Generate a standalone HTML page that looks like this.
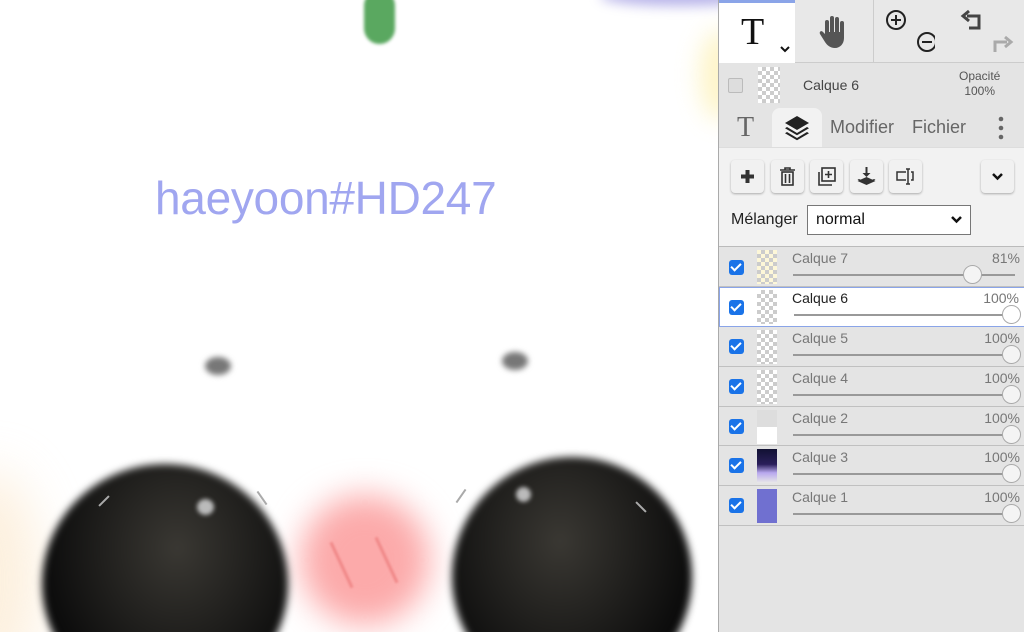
<!DOCTYPE html>
<html><head><meta charset="utf-8"><style>
*{margin:0;padding:0;box-sizing:border-box}
html,body{width:1024px;height:632px;overflow:hidden}
body{position:relative;background:#fff;font-family:"Liberation Sans",Arial,sans-serif}
.cv{position:absolute;left:0;top:0;width:718px;height:632px;background:#fff;overflow:hidden}
.b{position:absolute}
.panel{position:absolute;left:718px;top:0;width:306px;height:632px;background:#e4e4e4;border-left:1px solid #aaa;overflow:hidden}
.cb{position:absolute;left:10px;width:15px;height:15px;background:#1a73e8;border-radius:3px}
.cb:after{content:"";position:absolute;left:4px;top:1px;width:4px;height:8px;border:solid #fff;border-width:0 2.5px 2.5px 0;transform:rotate(45deg)}
.row{position:absolute;left:0;width:306px;border-bottom:1px solid #c0c0c0;background:#e4e4e4}
.row .n{position:absolute;left:73px;top:3px;font-size:14px;color:#777}
.row .p{position:absolute;right:5px;top:3px;font-size:14px;color:#777}
.row .tr{position:absolute;left:74px;right:10px;top:27px;height:2px;background:#999}
.row .k{position:absolute;top:18px;width:19px;height:19px;border-radius:50%;background:#f4f4f4;border:1px solid #aaa}
.th{position:absolute;left:38px;top:3px;width:20px;height:34px;background-color:#fff;background-image:linear-gradient(45deg,#ccc 25%,transparent 25%,transparent 75%,#ccc 75%),linear-gradient(45deg,#ccc 25%,transparent 25%,transparent 75%,#ccc 75%);background-size:8px 8px;background-position:0 0,4px 4px}
.btn{position:absolute;top:160px;width:33px;height:33px;background:#f1f1f1;border-radius:4px;box-shadow:0 1px 2px #aaa;text-align:center;color:#333}
.btn svg{position:absolute;left:6px;top:6px}
</style></head><body>
<div class="cv">
 <div class="b" style="left:-60px;top:470px;width:100px;height:220px;border-radius:50%;background:#fbe6c8;filter:blur(25px);opacity:.6"></div>
 <div class="b" style="left:700px;top:30px;width:40px;height:90px;border-radius:50%;background:#fdf0b0;filter:blur(12px);opacity:.7"></div>
 <div class="b" style="left:600px;top:-14px;width:160px;height:20px;border-radius:50%;background:#9a94e0;filter:blur(6px);opacity:.7"></div>
 <div class="b" style="left:364px;top:-10px;width:31px;height:54px;border-radius:16px;background:#5aa860;filter:blur(1.5px)"></div>
 <div class="b" style="left:155px;top:171px;font-size:46px;color:#a0a6f0;letter-spacing:-.3px">haeyoon#HD247</div>
 <div class="b" style="left:205px;top:357px;width:26px;height:18px;border-radius:50%;background:#777;filter:blur(3px)"></div>
 <div class="b" style="left:502px;top:352px;width:26px;height:18px;border-radius:50%;background:#777;filter:blur(3px)"></div>
 <div class="b" style="left:300px;top:495px;width:130px;height:130px;border-radius:50%;background:#fcaaaa;filter:blur(16px)"></div>
 <div class="b" style="left:340px;top:540px;width:3px;height:50px;background:#f08888;transform:rotate(-25deg);filter:blur(1px)"></div>
 <div class="b" style="left:385px;top:535px;width:3px;height:50px;background:#f08888;transform:rotate(-25deg);filter:blur(1px)"></div>
 <div class="b" style="left:42px;top:464px;width:246px;height:240px;border-radius:50%;background:radial-gradient(ellipse at 55% 35%,#3a3833,#0c0c0c 70%);filter:blur(4px)"></div>
 <div class="b" style="left:452px;top:457px;width:240px;height:240px;border-radius:50%;background:radial-gradient(ellipse at 45% 35%,#3a3833,#0c0c0c 70%);filter:blur(4px)"></div>
 <div class="b" style="left:197px;top:499px;width:17px;height:16px;border-radius:50%;background:#bbb;filter:blur(2px)"></div>
 <div class="b" style="left:516px;top:487px;width:15px;height:15px;border-radius:50%;background:#bbb;filter:blur(2px)"></div>
 <div class="b" style="left:103px;top:494px;width:2px;height:14px;background:#aaa;transform:rotate(45deg)"></div>
 <div class="b" style="left:261px;top:490px;width:2px;height:16px;background:#aaa;transform:rotate(-35deg)"></div>
 <div class="b" style="left:460px;top:488px;width:2px;height:16px;background:#aaa;transform:rotate(35deg)"></div>
 <div class="b" style="left:640px;top:500px;width:2px;height:14px;background:#aaa;transform:rotate(-45deg)"></div>
</div>
<div class="panel">
 <div class="b" style="left:0;top:0;width:306px;height:63px;background:#e8e8e8;border-bottom:1px solid #ccc"></div>
 <div class="b" style="left:0;top:0;width:76px;height:63px;background:#fff;border-top:3px solid #8aa4e8"></div>
 <div class="b" style="left:22px;top:10px;font-family:'Liberation Serif',serif;font-size:38px;color:#111">T</div>
 <svg class="b" style="left:61px;top:46px" width="10" height="7" viewBox="0 0 10 7"><path d="M1 1l4 4 4-4" stroke="#111" stroke-width="2" fill="none"/></svg>
 <svg class="b" style="left:99px;top:14px" width="32" height="36" viewBox="0 0 32 36" fill="#555"><rect x="7" y="6" width="4" height="16" rx="2"/><rect x="12" y="2" width="4" height="18" rx="2"/><rect x="17" y="3" width="4" height="18" rx="2"/><rect x="22" y="7" width="4" height="15" rx="2"/><path d="M7 18h19v6c0 6-4 10-9 10s-8-3-10-6l-5-8c-1-2 1-4 3-2l3 3z"/></svg>
 <div class="b" style="left:154px;top:0;width:1px;height:63px;background:#ccc"></div>
 <svg class="b" style="left:166px;top:8px" width="50" height="48" viewBox="0 0 50 48" fill="none" stroke="#222" stroke-width="2"><circle cx="11" cy="12" r="9"/><path d="M6 12h10M11 7v10"/><circle cx="42" cy="34" r="9"/><path d="M37 34h10"/></svg>
 <svg class="b" style="left:240px;top:8px" width="60" height="48" viewBox="0 0 60 48" fill="none" stroke-width="3"><path d="M8 8h12v12h-10" stroke="#444"/><path d="M10 3l-6 5 6 5" stroke="#444"/><path d="M36 44V34h12" stroke="#aaa"/><path d="M46 29l6 5-6 5" stroke="#aaa"/></svg>
 <div class="b" style="left:9px;top:78px;width:15px;height:15px;background:#ddd;border:1px solid #bbb;border-radius:2px"></div>
 <div class="th" style="left:39px;top:67px;height:36px;width:22px"></div>
 <div class="b" style="left:84px;top:77px;font-size:14px;color:#444">Calque 6</div>
 <div class="b" style="left:240px;top:69px;font-size:12px;color:#555;text-align:center;line-height:15px">Opacité<br>100%</div>
 <div class="b" style="left:53px;top:108px;width:50px;height:40px;background:#f2f2f2;border-radius:8px 8px 0 0"></div>
 <div class="b" style="left:0;top:147px;width:306px;height:100px;background:#f2f2f2;border-top:1px solid #ddd"></div>
 <div class="b" style="left:18px;top:112px;font-family:'Liberation Serif',serif;font-size:28px;color:#666">T</div>
 <svg class="b" style="left:64px;top:114px" width="28" height="28" viewBox="0 0 28 28" fill="#222"><path d="M14 2l12 7-12 7-12-7z"/><path d="M4 13l10 6 10-6 2 1.2-12 7-12-7z"/><path d="M4 18l10 6 10-6 2 1.2-12 7-12-7z"/></svg>
 <div class="b" style="left:111px;top:117px;font-size:18px;color:#666">Modifier</div>
 <div class="b" style="left:193px;top:117px;font-size:18px;color:#666">Fichier</div>
 <svg class="b" style="left:278px;top:115px" width="8" height="26"><circle cx="4" cy="4" r="2.3" fill="#666"/><circle cx="4" cy="13" r="2.3" fill="#666"/><circle cx="4" cy="22" r="2.3" fill="#666"/></svg>
 <div class="btn" style="left:12px"><svg width="21" height="21" viewBox="0 0 21 21"><path d="M10.5 4v13M4 10.5h13" stroke="#333" stroke-width="4"/></svg></div>
 <div class="btn" style="left:52px"><svg width="21" height="21" viewBox="0 0 21 21" fill="none" stroke="#333" stroke-width="1.6"><path d="M3 4h15M8 4V2h5v2"/><rect x="5" y="6" width="11" height="13"/><path d="M8.5 8v9M12.5 8v9"/></svg></div>
 <div class="btn" style="left:91px"><svg width="21" height="21" viewBox="0 0 21 21" fill="none" stroke="#333" stroke-width="1.6"><rect x="6" y="2" width="13" height="13"/><path d="M3 6v13h13M12.5 5v7M9 8.5h7"/></svg></div>
 <div class="btn" style="left:131px"><svg width="21" height="21" viewBox="0 0 21 21" fill="#333"><path d="M9.5 1h2v6h3l-4 4-4-4h3z"/><path d="M10.5 11l9 4-9 4-9-4z"/><path d="M3 13l7.5 3.4 7.5-3.4 1.5.7-9 4-9-4z"/></svg></div>
 <div class="btn" style="left:170px"><svg width="21" height="21" viewBox="0 0 21 21" fill="none" stroke="#333" stroke-width="1.5"><path d="M11 6H2v8h9M16 6h2v8h-2M11 3h4M13 3v15M11 18h4"/></svg></div>
 <div class="btn" style="left:262px"><svg width="21" height="21" viewBox="0 0 21 21"><path d="M6 8l4.5 4.5L15 8" stroke="#111" stroke-width="2.5" fill="none"/></svg></div>
 <div class="b" style="left:12px;top:211px;font-size:16px;color:#222">Mélanger</div>
 <div class="b" style="left:88px;top:205px;width:164px;height:30px;background:#fff;border:1px solid #777;font-size:16px;padding:5px 8px;color:#111">normal<svg style="position:absolute;right:8px;top:10px" width="11" height="8" viewBox="0 0 11 8"><path d="M1 1l4.5 4.5L10 1" stroke="#111" stroke-width="2.5" fill="none"/></svg></div>
 <div class="b" style="left:0;top:246px;width:306px;height:1px;background:#bbb"></div>
 <div class="row" style="top:247px;height:40px"><div class="cb" style="top:13px"></div><div class="th" style="background-color:#fdf7d8"></div><div class="n">Calque 7</div><div class="p">81%</div><div class="tr"></div><div class="k" style="left:244px"></div></div>
 <div class="row" style="top:287px;height:40px;background:#fff;border:1px solid #8aa4e8"><div class="cb" style="top:12px;left:9px"></div><div class="th" style="left:37px;top:2px"></div><div class="n" style="left:72px;top:2px;color:#222">Calque 6</div><div class="p" style="top:2px">100%</div><div class="tr" style="top:26px"></div><div class="k" style="left:282px;top:17px;background:#fff"></div></div>
 <div class="row" style="top:327px;height:40px"><div class="cb" style="top:12px"></div><div class="th"></div><div class="n">Calque 5</div><div class="p">100%</div><div class="tr"></div><div class="k" style="left:283px"></div></div>
 <div class="row" style="top:367px;height:40px"><div class="cb" style="top:12px"></div><div class="th"></div><div class="n">Calque 4</div><div class="p">100%</div><div class="tr"></div><div class="k" style="left:283px"></div></div>
 <div class="row" style="top:407px;height:39px"><div class="cb" style="top:12px"></div><div class="th" style="background-image:none;background:linear-gradient(#ddd 50%,#fff 50%)"></div><div class="n">Calque 2</div><div class="p">100%</div><div class="tr"></div><div class="k" style="left:283px"></div></div>
 <div class="row" style="top:446px;height:40px"><div class="cb" style="top:12px"></div><div class="th" style="background-image:none;background:linear-gradient(#111133,#2a1f5a 45%,#b8a8ee 70%,#e8e8e8)"></div><div class="n">Calque 3</div><div class="p">100%</div><div class="tr"></div><div class="k" style="left:283px"></div></div>
 <div class="row" style="top:486px;height:40px"><div class="cb" style="top:12px"></div><div class="th" style="background-image:none;background:#7070d0"></div><div class="n">Calque 1</div><div class="p">100%</div><div class="tr"></div><div class="k" style="left:283px"></div></div>
</div>
</body></html>
